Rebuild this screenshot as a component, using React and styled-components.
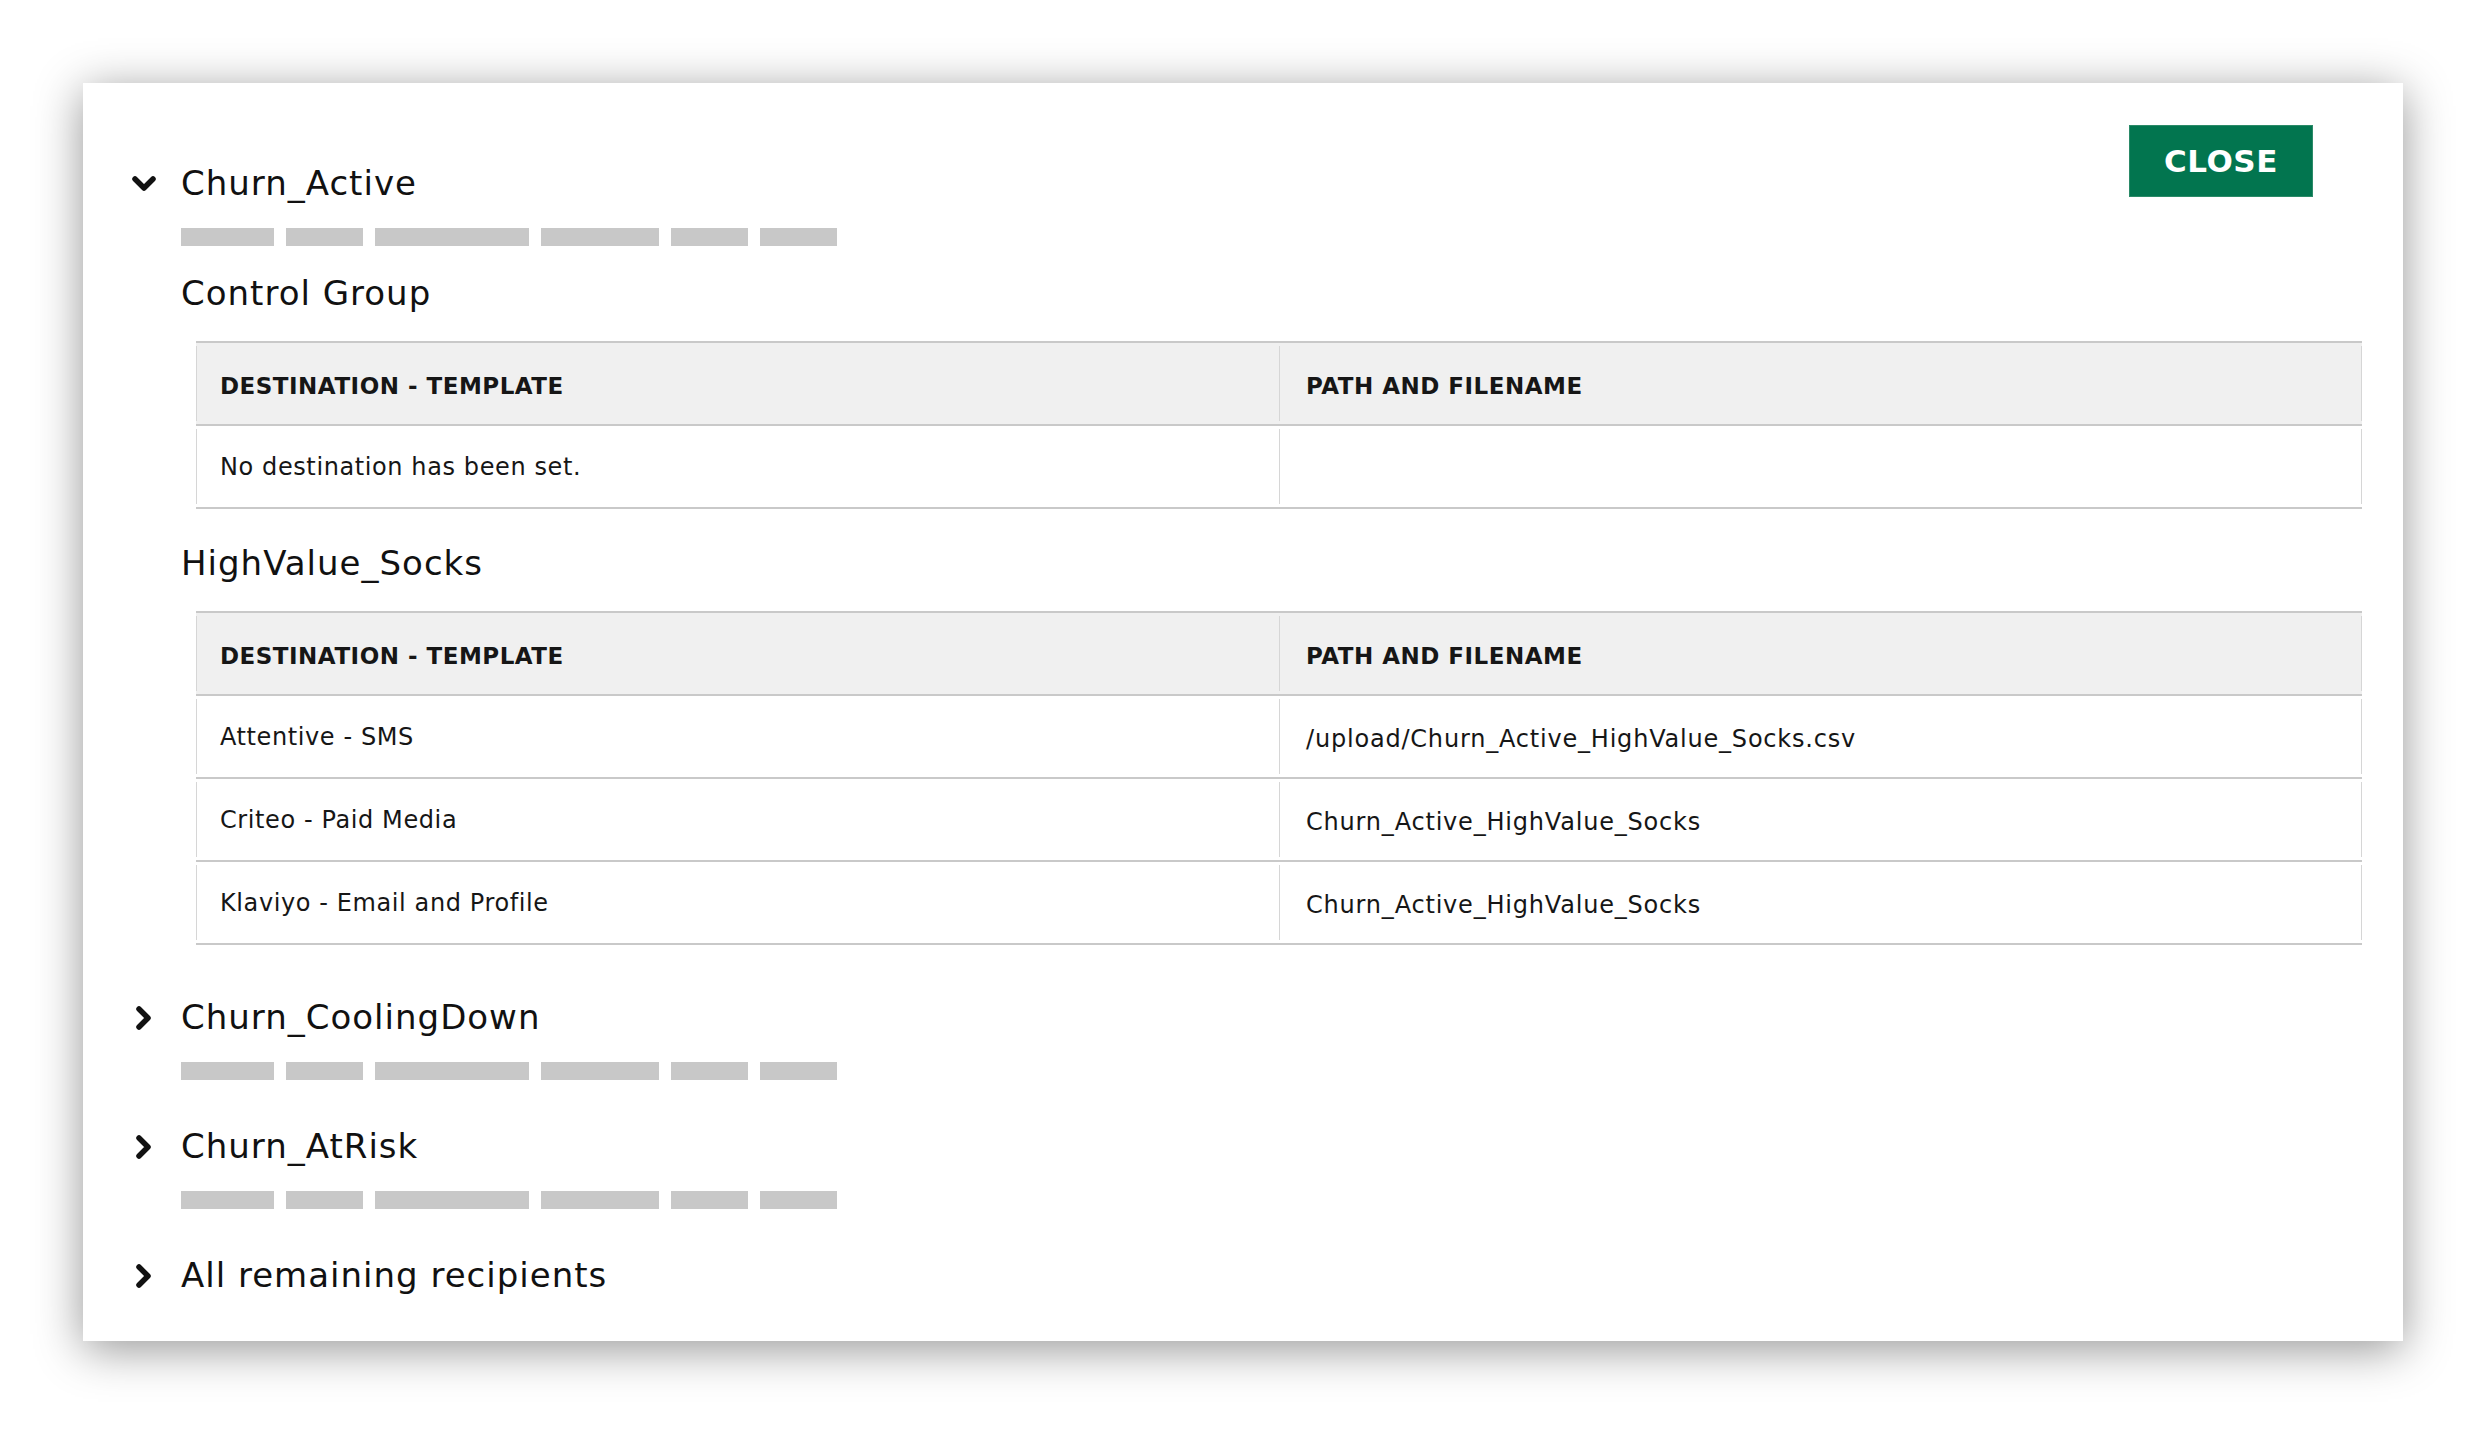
import React from 'react';
import styled, { createGlobalStyle } from 'styled-components';

const GlobalStyle = createGlobalStyle`
  html, body {
    margin: 0;
    padding: 0;
    background: #ffffff;
  }
  body {
    font-family: "DejaVu Sans", "Open Sans", sans-serif;
    color: #141414;
  }
  * {
    box-sizing: border-box;
  }
`;

const Page = styled.div`
  width: 2490px;
  height: 1432px;
  padding: 83px 87px 0 83px;
`;

const Card = styled.div`
  display: grid;
  grid-template-columns: 1fr;
  align-items: start;
  width: 2320px;
  height: 1258px;
  background: #ffffff;
  box-shadow: 0 8px 44px rgba(0, 0, 0, 0.42);
  padding: 42px 41px 44px 49px;
`;

const CloseButton = styled.button`
  grid-area: 1 / 1;
  justify-self: end;
  align-self: start;
  z-index: 1;
  width: 184px;
  height: 72px;
  margin-right: 49px;
  border: 1px solid #2b8a68;
  background: #02754f;
  color: #ffffff;
  font-family: "DejaVu Sans", sans-serif;
  font-weight: 700;
  font-size: 31px;
  letter-spacing: 0.5px;
  cursor: pointer;
`;

const SectionList = styled.div`
  grid-area: 1 / 1;
  display: flex;
  flex-direction: column;
  gap: 46px;
  margin-top: 38px;
`;

const Section = styled.div`
  display: flex;
  flex-direction: column;
`;

const SectionHeader = styled.div`
  display: flex;
  align-items: center;
  height: 40px;
  cursor: pointer;
`;

const ChevronBox = styled.span`
  display: flex;
  align-items: center;
  justify-content: center;
  width: 24px;
  height: 24px;
  margin-right: 25px;
  margin-top: ${props => (props.open ? 2 : 1)}px;
`;

const Title = styled.div`
  font-size: 34px;
  letter-spacing: 1px;
  line-height: 40px;
  font-weight: 400;
  color: #111111;
  white-space: nowrap;
`;

const Indent = styled.div`
  padding-left: 49px;
`;

const Bars = styled.div`
  display: flex;
  gap: 12px;
  margin-top: 25px;
`;

const Bar = styled.span`
  display: block;
  height: 18px;
  width: ${props => props.w}px;
  background: #c8c8c8;
`;

const SectionBody = styled.div`
  display: flex;
  flex-direction: column;
  gap: 34px;
  margin-top: 27px;
  margin-bottom: 6px;
`;

const Group = styled.div`
  display: flex;
  flex-direction: column;
`;

const GroupTitle = styled(Title)`
  margin-bottom: 28px;
`;

const Table = styled.div`
  margin-left: 15px;
  border-top: 2px solid #c9c9c9;
`;

const Row = styled.div`
  display: grid;
  grid-template-columns: 1083px 1fr;
  padding: 3px 0;
  border-bottom: 2px solid #c9c9c9;
  background: ${props => (props.head ? '#f0f0f0' : '#ffffff')};
`;

const Cell = styled.div`
  display: flex;
  align-items: center;
  height: 75px;
  padding-left: ${props => (props.second ? 26 : 23)}px;
  padding-right: 24px;
  padding-top: ${props => (props.head || props.second ? 5 : 0)}px;
  border-left: 1px solid #d6d6d6;
  border-right: ${props => (props.second ? '1px solid #d6d6d6' : 'none')};
  font-size: ${props => (props.head ? 23 : 24)}px;
  letter-spacing: ${props => (props.head ? 0.5 : props.second ? 0.8 : 0.6)}px;
  font-weight: ${props => (props.head ? 700 : 400)};
  color: #161616;
  white-space: nowrap;
`;

const Chevron = ({ open }) => (
  <svg width="24" height="24" viewBox="0 0 24 24">
    <polyline
      points={open ? '3,7 12,16 21,7' : '7,3 16,12 7,21'}
      fill="none"
      stroke="#111"
      strokeWidth="5.5"
      strokeLinecap="round"
      strokeLinejoin="round"
    />
  </svg>
);

const barWidths = [93, 77, 154, 118, 77, 77];

const sections = [
  {
    name: 'Churn_Active',
    open: true,
    groups: [
      { name: 'Control Group', rows: [['No destination has been set.', '']] },
      {
        name: 'HighValue_Socks',
        rows: [
          ['Attentive - SMS', '/upload/Churn_Active_HighValue_Socks.csv'],
          ['Criteo - Paid Media', 'Churn_Active_HighValue_Socks'],
          ['Klaviyo - Email and Profile', 'Churn_Active_HighValue_Socks'],
        ],
      },
    ],
  },
  { name: 'Churn_CoolingDown' },
  { name: 'Churn_AtRisk' },
  { name: 'All remaining recipients', noBars: true },
];

const DestinationTable = ({ rows }) => (
  <Table>
    <Row head>
      <Cell head>DESTINATION - TEMPLATE</Cell>
      <Cell head second>PATH AND FILENAME</Cell>
    </Row>
    {rows.map(([dest, path]) => (
      <Row key={dest}>
        <Cell>{dest}</Cell>
        <Cell second>{path}</Cell>
      </Row>
    ))}
  </Table>
);

export default function App() {
  return (
    <Page>
      <GlobalStyle />
      <Card>
        <CloseButton>CLOSE</CloseButton>
        <SectionList>
          {sections.map(section => (
            <Section key={section.name}>
              <SectionHeader>
                <ChevronBox open={section.open}>
                  <Chevron open={section.open} />
                </ChevronBox>
                <Title>{section.name}</Title>
              </SectionHeader>
              <Indent>
                {!section.noBars && (
                  <Bars>
                    {barWidths.map((w, i) => (
                      <Bar key={i} w={w} />
                    ))}
                  </Bars>
                )}
                {section.open && (
                  <SectionBody>
                    {section.groups.map(group => (
                      <Group key={group.name}>
                        <GroupTitle>{group.name}</GroupTitle>
                        <DestinationTable rows={group.rows} />
                      </Group>
                    ))}
                  </SectionBody>
                )}
              </Indent>
            </Section>
          ))}
        </SectionList>
      </Card>
    </Page>
  );
}
